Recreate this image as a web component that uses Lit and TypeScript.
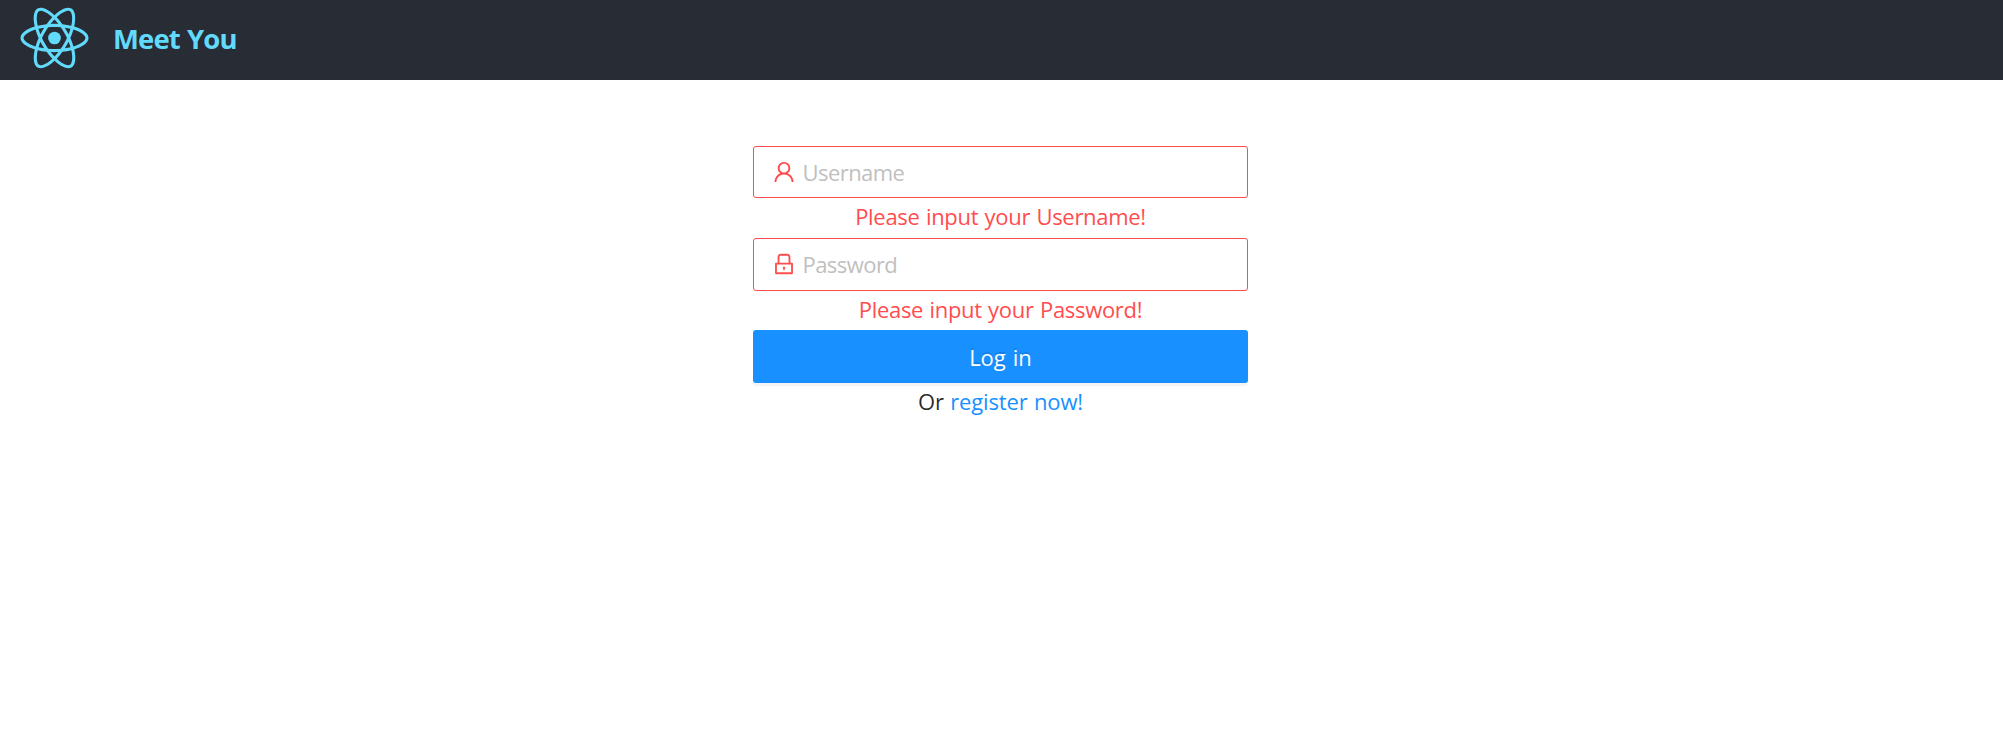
import { LitElement, html, css, svg } from "lit";
import { customElement } from "lit/decorators.js";

const reactPath =
  "M666.3 296.5c0-32.5-40.7-63.3-103.1-82.4 14.4-63.6 8-114.2-20.2-130.4-6.5-3.8-14.1-5.6-22.4-5.6v22.3c4.6 0 8.3.9 11.4 2.6 13.6 7.8 19.5 37.5 14.9 75.7-1.1 9.4-2.9 19.3-5.1 29.4-19.6-4.8-41-8.5-63.5-10.9-13.5-18.5-27.5-35.3-41.6-50 32.6-30.3 63.2-46.9 84-46.9V78c-27.5 0-63.5 19.6-99.9 53.6-36.4-33.8-72.4-53.2-99.9-53.2v22.3c20.7 0 51.4 16.5 84 46.6-14 14.7-28 31.4-41.3 49.9-22.6 2.4-44 6.1-63.6 11-2.3-10-4-19.7-5.2-29-4.7-38.2 1.1-67.9 14.6-75.8 3-1.8 6.9-2.6 11.5-2.6V78.5c-8.4 0-16 1.8-22.6 5.6-28.1 16.2-34.4 66.7-19.9 130.1-62.2 19.2-102.7 49.9-102.7 82.3 0 32.5 40.7 63.3 103.1 82.4-14.4 63.6-8 114.2 20.2 130.4 6.5 3.8 14.1 5.6 22.5 5.6 27.5 0 63.5-19.6 99.9-53.6 36.4 33.8 72.4 53.2 99.9 53.2 8.4 0 16-1.8 22.6-5.6 28.1-16.2 34.4-66.7 19.9-130.1 62-19.1 102.5-49.9 102.5-82.3zm-130.2-66.7c-3.7 12.9-8.3 26.2-13.5 39.5-4.1-8-8.4-16-13.1-24-4.6-8-9.5-15.8-14.4-23.4 14.2 2.1 27.9 4.7 41 7.9zm-45.8 106.5c-7.8 13.5-15.8 26.3-24.1 38.2-14.9 1.3-30 2-45.2 2-15.1 0-30.2-.7-45-1.9-8.3-11.9-16.4-24.6-24.2-38-7.6-13.1-14.5-26.4-20.8-39.8 6.2-13.4 13.2-26.8 20.7-39.9 7.8-13.5 15.8-26.3 24.1-38.2 14.9-1.3 30-2 45.2-2 15.1 0 30.2.7 45 1.9 8.3 11.9 16.4 24.6 24.2 38 7.6 13.1 14.5 26.4 20.8 39.8-6.3 13.4-13.2 26.8-20.7 39.9zm32.3-13c5.4 13.4 10 26.8 13.8 39.8-13.1 3.2-26.9 5.9-41.2 8 4.9-7.7 9.8-15.6 14.4-23.7 4.6-8 8.9-16.1 13-24.1zM421.2 430c-9.3-9.6-18.6-20.3-27.8-32 9 .4 18.2.7 27.5.7 9.4 0 18.7-.2 27.8-.7-9 11.7-18.3 22.4-27.5 32zm-74.4-58.9c-14.2-2.1-27.9-4.7-41-7.9 3.7-12.9 8.3-26.2 13.5-39.5 4.1 8 8.4 16 13.1 24 4.7 8 9.5 15.8 14.4 23.4zM420.7 163c9.3 9.6 18.6 20.3 27.8 32-9-.4-18.2-.7-27.5-.7-9.4 0-18.7.2-27.8.7 9-11.7 18.3-22.4 27.5-32zm-74 58.9c-4.9 7.7-9.8 15.6-14.4 23.7-4.6 8-8.9 16-13 24-5.4-13.4-10-26.8-13.8-39.8 13.1-3.1 26.9-5.8 41.2-7.9zm-90.5 125.2c-35.4-15.1-58.3-34.9-58.3-50.6 0-15.7 22.9-35.6 58.3-50.6 8.6-3.7 18-7 27.7-10.1 5.7 19.6 13.2 40 22.5 60.9-9.2 20.8-16.6 41.1-22.2 60.6-9.9-3.1-19.3-6.5-28-10.2zM310 490c-13.6-7.8-19.5-37.5-14.9-75.7 1.1-9.4 2.9-19.3 5.1-29.4 19.6 4.8 41 8.5 63.5 10.9 13.5 18.5 27.5 35.3 41.6 50-32.6 30.3-63.2 46.9-84 46.9-4.5-.1-8.3-1-11.3-2.7zm237.2-76.2c4.7 38.2-1.1 67.9-14.6 75.8-3 1.8-6.9 2.6-11.5 2.6-20.7 0-51.4-16.5-84-46.6 14-14.7 28-31.4 41.3-49.9 22.6-2.4 44-6.1 63.6-11 2.3 10.1 4.1 19.8 5.2 29.1zm38.5-66.7c-8.6 3.7-18 7-27.7 10.1-5.7-19.6-13.2-40-22.5-60.9 9.2-20.8 16.6-41.1 22.2-60.6 9.9 3.1 19.3 6.5 28.1 10.2 35.4 15.1 58.3 34.9 58.3 50.6-.1 15.7-23 35.6-58.4 50.6z";

const userIcon = svg`<path d="M858.5 763.6a374 374 0 0 0-80.6-119.5 375.63 375.63 0 0 0-119.5-80.6c-.4-.2-.8-.3-1.2-.5C719.5 518 760 444.7 760 362c0-137-111-248-248-248S264 225 264 362c0 82.7 40.5 156 102.8 201.1-.4.2-.8.3-1.2.5-44.8 18.9-85 46-119.5 80.6a375.63 375.63 0 0 0-80.6 119.5A371.7 371.7 0 0 0 136 901.8a8 8 0 0 0 8 8.2h60c4.4 0 7.9-3.5 8-7.8 2-77.2 33-149.5 87.8-204.3 56.7-56.7 132-87.9 212.2-87.9s155.5 31.2 212.2 87.9C779 752.7 810 825 812 902.2c.1 4.4 3.6 7.8 8 7.8h60a8 8 0 0 0 8-8.2c-1-47.8-10.9-94.3-29.5-138.2zM512 534c-45.9 0-89.1-17.9-121.6-50.4S340 407.9 340 362c0-45.9 17.9-89.1 50.4-121.6S466.1 190 512 190s89.1 17.9 121.6 50.4S684 316.1 684 362c0 45.9-17.9 89.1-50.4 121.6S557.9 534 512 534z"/>`;

const lockIcon = svg`<path d="M832 464h-68V240c0-70.7-57.3-128-128-128H388c-70.7 0-128 57.3-128 128v224h-68c-17.7 0-32 14.3-32 32v384c0 17.7 14.3 32 32 32h640c17.7 0 32-14.3 32-32V496c0-17.7-14.3-32-32-32zM332 240c0-30.9 25.1-56 56-56h248c30.9 0 56 25.1 56 56v224H332V240zm460 600H232V536h560v304zM484 701v53c0 4.4 3.6 8 8 8h40c4.4 0 8-3.6 8-8v-53a48.1 48.1 0 1 0-56 0z"/>`;

@customElement("app-root")
export class AppRoot extends LitElement {
  static styles = css`
    :host {
      display: block;
      min-height: 100vh;
      background: #fff;
      font-family: "Open Sans", "Noto Sans", sans-serif;
      font-size: 22px;
      color: rgba(0, 0, 0, 0.85);
    }
    * { box-sizing: border-box; }
    header {
      display: flex;
      align-items: center;
      height: 80px;
      padding: 0 20px 4px;
      background: #282c34;
      color: #61dafb;
    }
    .logo { width: 69px; height: 62px; flex: none; fill: #61dafb; }
    h1 {
      margin: 2px 0 0 24px;
      font-size: 27.5px;
      line-height: 40px;
      font-weight: 700;
      letter-spacing: -0.85px;
      word-spacing: 0.7px;
      white-space: nowrap;
    }
    main {
      display: flex;
      justify-content: center;
      padding: 66px 2px 0 0;
    }
    form { display: grid; width: 495px; grid-template-rows: 52px 40px 53px 39px 53px 40px; }
    .field {
      display: flex;
      align-items: center;
      padding: 0 17px;
      border: 1px solid #ff4d4f;
      border-radius: 3px;
    }
    .field.lock { padding-bottom: 1px; }
    .field svg { width: 26px; height: 26px; flex: none; fill: #ff4d4f; }
    input {
      flex: 1;
      min-width: 0;
      height: 30px;
      margin: 0 0 0 5.5px;
      padding: 0;
      border: 0;
      outline: 0;
      background: none;
      font: inherit;
      letter-spacing: -0.55px;
    }
    input::placeholder { color: #bfbfbf; opacity: 1; }
    .line {
      text-align: center;
      line-height: 36px;
      letter-spacing: -0.15px;
      word-spacing: 0.9px;
      white-space: nowrap;
    }
    .error { color: #ff4d4f; letter-spacing: -0.3px; }
    button {
      padding: 0;
      border: 0;
      border-radius: 3px;
      background: #1890ff;
      box-shadow: 0 3px 0 rgba(0, 0, 0, 0.045);
      color: #fff;
      font: inherit;
      word-spacing: 1.3px;
      text-shadow: 0 -2px 0 rgba(0, 0, 0, 0.12);
    }
    a { color: #1890ff; text-decoration: none; }
  `;

  render() {
    return html`
      <header>
        <svg class="logo" viewBox="172.1 72.8 497.8 447.3"><path d=${reactPath} /><circle cx="420.9" cy="296.5" r="45.7" /></svg>
        <h1>Meet You</h1>
      </header>
      <main>
        <form>
          <label class="field">
            <svg viewBox="0 0 1024 1024">${userIcon}</svg>
            <input type="text" placeholder="Username" />
          </label>
          <div class="line error">Please input your Username!</div>
          <label class="field lock">
            <svg viewBox="0 0 1024 1024">${lockIcon}</svg>
            <input type="password" placeholder="Password" />
          </label>
          <div class="line error">Please input your Password!</div>
          <button type="button">Log in</button>
          <div class="line">Or <a href="#">register now!</a></div>
        </form>
      </main>
    `;
  }
}
